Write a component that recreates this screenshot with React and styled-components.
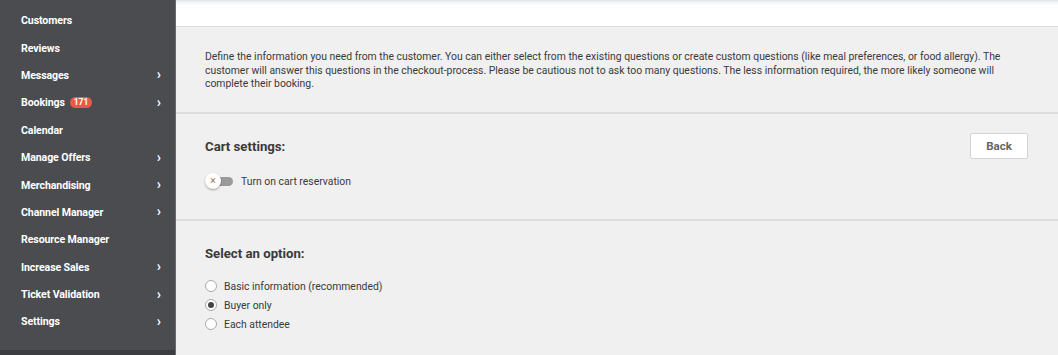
import React from "react";
import styled, { createGlobalStyle } from "styled-components";

const GlobalStyle = createGlobalStyle`
  html, body {
    margin: 0;
    padding: 0;
    background: #f0f0f0;
    font-family: Roboto, "Liberation Sans", Arial, sans-serif;
  }
  * { box-sizing: border-box; }
`;

const menu = [
  { label: "Customers" },
  { label: "Reviews" },
  { label: "Messages", arrow: true },
  { label: "Bookings", arrow: true, badge: "171" },
  { label: "Calendar" },
  { label: "Manage Offers", arrow: true },
  { label: "Merchandising", arrow: true },
  { label: "Channel Manager", arrow: true },
  { label: "Resource Manager" },
  { label: "Increase Sales", arrow: true },
  { label: "Ticket Validation", arrow: true },
  { label: "Settings", arrow: true },
];

const options = [
  { label: "Basic information (recommended)" },
  { label: "Buyer only", checked: true },
  { label: "Each attendee" },
];

export default function App() {
  return (
    <Page>
      <GlobalStyle />
      <Sidebar>
        <MenuList>
          {menu.map((item) => (
            <MenuItem key={item.label}>
              <span>
                {item.label}
                {item.badge && <Badge>{item.badge}</Badge>}
              </span>
              {item.arrow && <Chevron>›</Chevron>}
            </MenuItem>
          ))}
        </MenuList>
        <SidebarFoot />
      </Sidebar>
      <Main>
        <TopBar />
        <Section $pad="23px 29px 21px">
          <Intro>
            Define the information you need from the customer. You can either select from the existing
            questions or create custom questions (like meal preferences, or food allergy). The customer will
            answer this questions in the checkout-process. Please be cautious not to ask too many questions.
            The less information required, the more likely someone will complete their booking.
          </Intro>
        </Section>
        <Section $pad="19px 29px 31px">
          <HeadRow>
            <Heading>Cart settings:</Heading>
            <BackButton>Back</BackButton>
          </HeadRow>
          <ToggleRow>
            <Toggle>
              <Knob>×</Knob>
            </Toggle>
            <Label>Turn on cart reservation</Label>
          </ToggleRow>
        </Section>
        <Section $pad="25px 29px 20px" $last>
          <Heading>Select an option:</Heading>
          <RadioList>
            {options.map((o) => (
              <RadioRow key={o.label}>
                <Radio $checked={o.checked} />
                <Label>{o.label}</Label>
              </RadioRow>
            ))}
          </RadioList>
        </Section>
      </Main>
    </Page>
  );
}

const Page = styled.div`
  display: flex;
  width: 1058px;
  height: 355px;
  overflow: hidden;
`;

const Sidebar = styled.nav`
  width: 176px;
  flex-shrink: 0;
  background: #4b4c50;
  border-right: 1px solid #6a6b6f;
  display: flex;
  flex-direction: column;
  justify-content: space-between;
`;

const MenuList = styled.ul`
  list-style: none;
  margin: 0;
  padding: 7px 0 0;
`;

const MenuItem = styled.li`
  height: 27.4px;
  display: flex;
  align-items: center;
  justify-content: space-between;
  padding: 0 14px 0 21px;
  color: #ffffff;
  font-size: 10.6px;
  font-weight: 700;
  letter-spacing: -0.1px;
  span {
    display: flex;
    align-items: center;
  }
`;

const Badge = styled.em`
  font-style: normal;
  background: #e9594b;
  color: #fff;
  font-size: 8.5px;
  font-weight: 700;
  border-radius: 6px;
  height: 11px;
  line-height: 11px;
  padding: 0 4px;
  margin-left: 5px;
`;

const Chevron = styled.i`
  font-style: normal;
  font-size: 14px;
  font-weight: 700;
  line-height: 1;
  margin-top: -2px;
`;

const SidebarFoot = styled.div`
  height: 5px;
  background: #3c3d41;
`;

const Main = styled.main`
  flex: 1;
  display: flex;
  flex-direction: column;
  background: #f0f0f0;
`;

const TopBar = styled.div`
  height: 27px;
  flex-shrink: 0;
  background: linear-gradient(#dfe4ea 0px, #f6f8fa 3px, #ffffff 6px);
  border-bottom: 1px solid #dcdcdc;
`;

const Section = styled.section`
  padding: ${(p) => p.$pad};
  border-bottom: ${(p) => (p.$last ? "none" : "2px solid #dedede")};
`;

const Intro = styled.p`
  margin: 0;
  max-width: 820px;
  font-size: 10.4px;
  line-height: 13.5px;
  color: #3a3a3a;
`;

const HeadRow = styled.div`
  display: flex;
  justify-content: space-between;
  align-items: center;
`;

const Heading = styled.h3`
  margin: 0;
  font-size: 13.2px;
  font-weight: 700;
  color: #3a3a3a;
`;

const BackButton = styled.button`
  width: 58px;
  height: 26px;
  margin: 0 1px 2px 0;
  background: #fff;
  border: 1px solid #d4d4d4;
  border-radius: 2px;
  color: #666;
  font-family: inherit;
  font-size: 11.5px;
  font-weight: 700;
`;

const ToggleRow = styled.div`
  display: flex;
  align-items: center;
  gap: 8px;
  margin-top: 14px;
`;

const Toggle = styled.div`
  position: relative;
  width: 27px;
  height: 9px;
  border-radius: 5px;
  background: #9a9a9a;
  margin-left: 1px;
`;

const Knob = styled.span`
  position: absolute;
  left: -1px;
  top: -4px;
  width: 16px;
  height: 16px;
  border-radius: 50%;
  background: #fff;
  box-shadow: 0 1px 2px rgba(0, 0, 0, 0.35);
  color: #777;
  font-size: 10px;
  line-height: 15px;
  text-align: center;
`;

const Label = styled.span`
  font-size: 10.4px;
  color: #3a3a3a;
`;

const RadioList = styled.div`
  display: flex;
  flex-direction: column;
  gap: 6px;
  margin-top: 19px;
`;

const RadioRow = styled.label`
  display: flex;
  align-items: center;
  gap: 7px;
  height: 13px;
`;

const Radio = styled.span`
  width: 12px;
  height: 12px;
  border-radius: 50%;
  border: 1px solid #a9a9a9;
  background: #fff;
  display: flex;
  align-items: center;
  justify-content: center;
  &::after {
    content: "";
    width: 6px;
    height: 6px;
    border-radius: 50%;
    background: ${(p) => (p.$checked ? "#444" : "transparent")};
  }
`;
